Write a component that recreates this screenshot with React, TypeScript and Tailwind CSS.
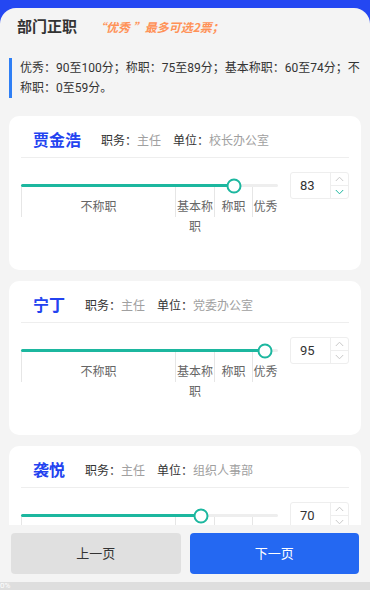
import React from 'react';

type Person = { name: string; duty: string; unit: string; score: number; active?: boolean };

const people: Person[] = [
  { name: '贾金浩', duty: '主任', unit: '校长办公室', score: 83, active: true },
  { name: '宁丁', duty: '主任', unit: '党委办公室', score: 95 },
  { name: '袭悦', duty: '主任', unit: '组织人事部', score: 70 },
];

const segments = [
  { label: '不称职', w: 'w-[60%]' },
  { label: '基本称职', w: 'w-[15%]' },
  { label: '称职', w: 'w-[15%]' },
  { label: '优秀', w: 'w-[10%]' },
];

const Chevron = ({ up, color }: { up?: boolean; color: string }) => (
  <svg width="9" height="6" viewBox="0 0 9 6" fill="none">
    <path d={up ? 'M0.8 5L4.5 1.2L8.2 5' : 'M0.8 1L4.5 4.8L8.2 1'} stroke={color} strokeWidth="1" />
  </svg>
);

const ScoreCard = ({ p }: { p: Person }) => (
  <div className="bg-white rounded-[10px] px-3 pb-[53px]">
    {/* 头部 */}
    <div className="flex items-center pt-[14px] pb-[5px] border-b border-[#eeeeee]">
      <span className="ml-3 mr-[20px] text-[16px] leading-[22px] font-bold text-[#2343f0]">{p.name}</span>
      <span className="text-xs text-[#333]">职务：</span>
      <span className="text-xs text-[#a0a0a0]">{p.duty}</span>
      <span className="ml-3 text-xs text-[#333]">单位：</span>
      <span className="text-xs text-[#a0a0a0]">{p.unit}</span>
    </div>

    {/* 打分 */}
    <div className="flex items-start gap-3 pt-[14px]">
      <div className="w-[257px] pt-3">
        <div className="relative h-[3px] rounded-full bg-[#eeeeee]">
          <div className="h-full rounded-full bg-[#1cb79f]" style={{ width: `${p.score}%` }} />
          <div
            className="absolute top-1/2 -translate-x-1/2 -translate-y-1/2 w-[15px] h-[15px] rounded-full bg-white border-2 border-[#1cb79f]"
            style={{ left: `${p.score}%` }}
          />
        </div>
        <div className="flex h-[30px]">
          {segments.map(s => (
            <div key={s.label} className={`${s.w} border-l border-[#e6e6e6] pt-[10px] text-center text-xs leading-5 text-[#666]`}>
              {s.label}
            </div>
          ))}
        </div>
      </div>
      <div className="flex w-[59px] h-[27px] border border-[#eeeeee] rounded-[3px]">
        <div className="flex-1 pl-[9px] text-[13px] leading-[25px] text-[#333]">{p.score}</div>
        <div className="w-[18px] flex flex-col border-l border-[#eeeeee]">
          <div className="flex-1 flex items-center justify-center border-b border-[#eeeeee]">
            <Chevron up color="#c8c8c8" />
          </div>
          <div className="flex-1 flex items-center justify-center">
            <Chevron color={p.active ? '#1cb79f' : '#c8c8c8'} />
          </div>
        </div>
      </div>
    </div>
  </div>
);

export default function App() {
  return (
    <div className="h-[590px] flex flex-col bg-[#2447f2] font-[Roboto,'Noto_Sans_CJK_SC',sans-serif]">
      <div className="h-[8px] shrink-0" />
      <div className="flex-1 min-h-0 flex flex-col bg-[#f4f4f4] rounded-t-[16px]">
        <div className="flex-1 min-h-0 overflow-hidden">
          {/* 标题 */}
          <div className="flex items-center pt-2 pl-[17px]">
            <span className="text-[15px] leading-[22px] font-bold text-[#333]">部门正职</span>
            <span className="ml-[17px] text-xs italic font-semibold text-[#ff9258] font-['Noto_Sans_CJK_SC',sans-serif]">“优秀 ”最多可选2票；</span>
          </div>

          {/* 说明 */}
          <div className="mt-5 ml-[9px] mr-[2px] border-l-[3px] border-[#2f7ff5] pl-[8px] text-xs leading-5 text-[#333]">
            优秀：90至100分；称职：75至89分；基本称职：60至74分；不称职：0至59分。
          </div>

          {/* 列表 */}
          <div className="mt-[18px] mx-[9px] flex flex-col gap-[11px]">
            {people.map(p => (
              <ScoreCard key={p.name} p={p} />
            ))}
          </div>
        </div>

        {/* 底部按钮 */}
        <div className="h-[57px] shrink-0 flex items-center gap-[9px] px-[11px] bg-[#f4f4f4]">
          <button className="flex-1 h-[41px] rounded bg-[#e0e0e0] text-[13px] text-[#333]">上一页</button>
          <button className="flex-1 h-[41px] rounded bg-[#2468f2] text-[13px] text-white">下一页</button>
        </div>
      </div>
      <div className="h-[8px] shrink-0 bg-[#dedede] text-[8px] leading-[8px] text-white">0%</div>
    </div>
  );
}
